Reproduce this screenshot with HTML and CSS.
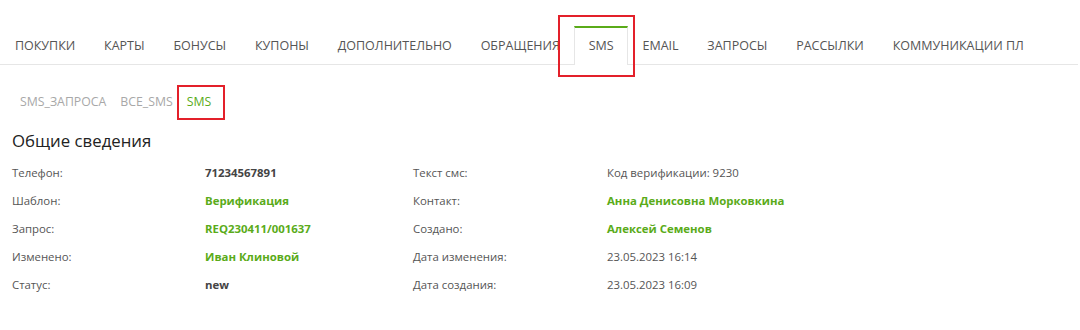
FILE: index.html
```html
<!DOCTYPE html>
<html lang="ru">
<head>
    <meta charset="UTF-8">
    <title>SMS</title>
    <link rel="stylesheet" href="styles.css">
</head>
<body>
    <ul class="tabs">
        <li class="tab">ПОКУПКИ</li>
        <li class="tab">КАРТЫ</li>
        <li class="tab">БОНУСЫ</li>
        <li class="tab">КУПОНЫ</li>
        <li class="tab">ДОПОЛНИТЕЛЬНО</li>
        <li class="tab">ОБРАЩЕНИЯ</li>
        <li class="tab active mark-tab">SMS</li>
        <li class="tab">EMAIL</li>
        <li class="tab">ЗАПРОСЫ</li>
        <li class="tab">РАССЫЛКИ</li>
        <li class="tab">КОММУНИКАЦИИ ПЛ</li>
    </ul>

    <ul class="subtabs">
        <li class="subtab">SMS_ЗАПРОСА</li>
        <li class="subtab">ВСЕ_SMS</li>
        <li class="subtab active mark-sub">SMS</li>
    </ul>

    <h2 class="section-title">Общие сведения</h2>

    <div class="details">
        <div class="label">Телефон:</div>
        <div class="value">71234567891</div>
        <div class="label">Текст смс:</div>
        <div class="text">Код верификации: 9230</div>

        <div class="label">Шаблон:</div>
        <div class="value link">Верификация</div>
        <div class="label">Контакт:</div>
        <div class="value link">Анна Денисовна Морковкина</div>

        <div class="label">Запрос:</div>
        <div class="value link">REQ230411/001637</div>
        <div class="label">Создано:</div>
        <div class="value link">Алексей Семенов</div>

        <div class="label">Изменено:</div>
        <div class="value link">Иван Клиновой</div>
        <div class="label">Дата изменения:</div>
        <div class="text">23.05.2023 16:14</div>

        <div class="label">Статус:</div>
        <div class="value">new</div>
        <div class="label">Дата создания:</div>
        <div class="text">23.05.2023 16:09</div>
    </div>
</body>
</html>
```

FILE: styles.css
```css
body {
    margin: 0;
    font-family: "Open Sans", "Liberation Sans", sans-serif;
    color: #333;
    background: #fff;
}
ul {
    list-style: none;
    margin: 0;
    padding: 0;
}

/* main tabs */
.tabs {
    display: flex;
    margin: 26px 2px 0 0;
    padding-left: 0.5px;
    border-bottom: 1px solid #e6e6e6;
}
.tab {
    position: relative;
    padding: 0 13.4px 1px;
    border: 1px solid transparent;
    border-top-width: 2px;
    border-bottom: 0;
    line-height: 35px;
    margin-bottom: -1px;
    font-size: 12.5px;
    color: #555;
    white-space: nowrap;
}
.tab.active {
    background: #fff;
    border-color: #e6e6e6;
    border-top-color: #5aab19;
    padding-bottom: 2px;
}

/* sub tabs */
.subtabs {
    display: flex;
    padding: 27px 0 0 13px;
}
.subtab {
    position: relative;
    padding: 0 7px;
    line-height: 20px;
    font-size: 12.3px;
    color: #a8a8a8;
}
.subtab.active {
    color: #5aab19;
}

/* red annotation frames */
.mark-tab::after,
.mark-sub::after {
    content: '';
    position: absolute;
    border: 2px solid #e3202a;
}
.mark-tab::after {
    left: -17px;
    right: -8px;
    top: -13px;
    bottom: -12px;
}
.mark-sub::after {
    left: -3px;
    right: -7px;
    top: -7px;
    bottom: -8px;
}

.section-title {
    margin: 17px 0 0 12px;
    font-size: 16.8px;
    line-height: 24px;
    font-weight: 400;
    color: #222;
}

/* details grid */
.details {
    display: grid;
    grid-template-columns: 193px 208px 194px auto;
    grid-auto-rows: 28px;
    align-items: center;
    margin: 5px 0 0 12px;
    font-size: 11.4px;
}
.label {
    color: #555;
}
.value {
    font-weight: 700;
    color: #444;
}
.text {
    color: #555;
}
.link {
    color: #5aab19;
}
```
